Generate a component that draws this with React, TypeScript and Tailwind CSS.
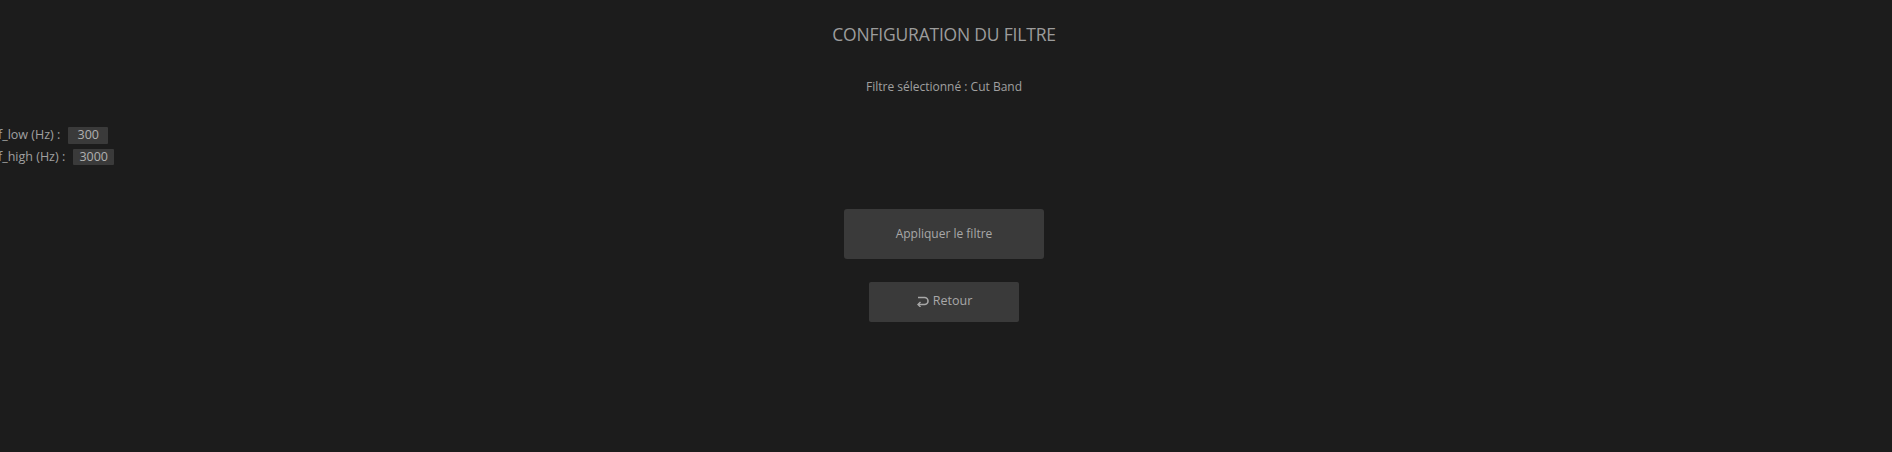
import { useState } from 'react'

function ReturnIcon() {
  return (
    <svg width="13" height="11" viewBox="0 0 13 11" fill="none" className="inline-block">
      <path d="M2 1.5h6.5a3.5 3.5 0 0 1 0 7H2.5" stroke="currentColor" strokeWidth="1.6" />
      <path d="M4.5 6 2 8.5 4.5 11" stroke="currentColor" strokeWidth="1.4" />
    </svg>
  )
}

export default function App() {
  const [fLow, setFLow] = useState('300')
  const [fHigh, setFHigh] = useState('3000')

  return (
    <div
      className="min-h-[452px] w-full bg-[#1c1c1c] text-[#a8a8a8] overflow-hidden"
      style={{ fontFamily: '"Open Sans", "Noto Sans", sans-serif' }}
    >
      <div className="flex flex-col items-center pr-1 pt-[22px]">
        <h1 className="text-[17.5px] leading-[24px] tracking-[-0.2px] text-[#9c9c9c]">
          CONFIGURATION DU FILTRE
        </h1>
        <p className="mt-[32px] text-[12px] leading-[18px] text-[#a0a0a0]">
          Filtre sélectionné : Cut Band
        </p>
      </div>

      <div className="mt-[30px] -ml-[2px] flex flex-col gap-[3px] text-[12.5px] text-[#a0a0a0]">
        <label className="flex items-center gap-[8px]">
          <span>f_low (Hz) :</span>
          <input
            value={fLow}
            onChange={(e) => setFLow(e.target.value)}
            className="w-[40px] h-[17px] bg-[#3a3a3a] text-center text-[12.5px] text-[#b0b0b0] outline-none rounded-[1px]"
          />
        </label>
        <label className="flex items-center gap-[8px]">
          <span>f_high (Hz) :</span>
          <input
            value={fHigh}
            onChange={(e) => setFHigh(e.target.value)}
            className="w-[41px] h-[16px] bg-[#3a3a3a] text-center text-[12.5px] text-[#b0b0b0] outline-none rounded-[1px]"
          />
        </label>
      </div>

      <div className="flex flex-col items-center pr-1 mt-[42px]">
        <button className="w-[200px] h-[50px] bg-[#3a3a3a] rounded-[3px] text-[12px] text-[#a8a8a8]">
          Appliquer le filtre
        </button>
        <button className="mt-[23px] w-[150px] h-[40px] bg-[#3a3a3a] rounded-[2px] text-[12.5px] text-[#a8a8a8] flex items-center justify-center gap-[4px]">
          <ReturnIcon />
          <span>Retour</span>
        </button>
      </div>
    </div>
  )
}
